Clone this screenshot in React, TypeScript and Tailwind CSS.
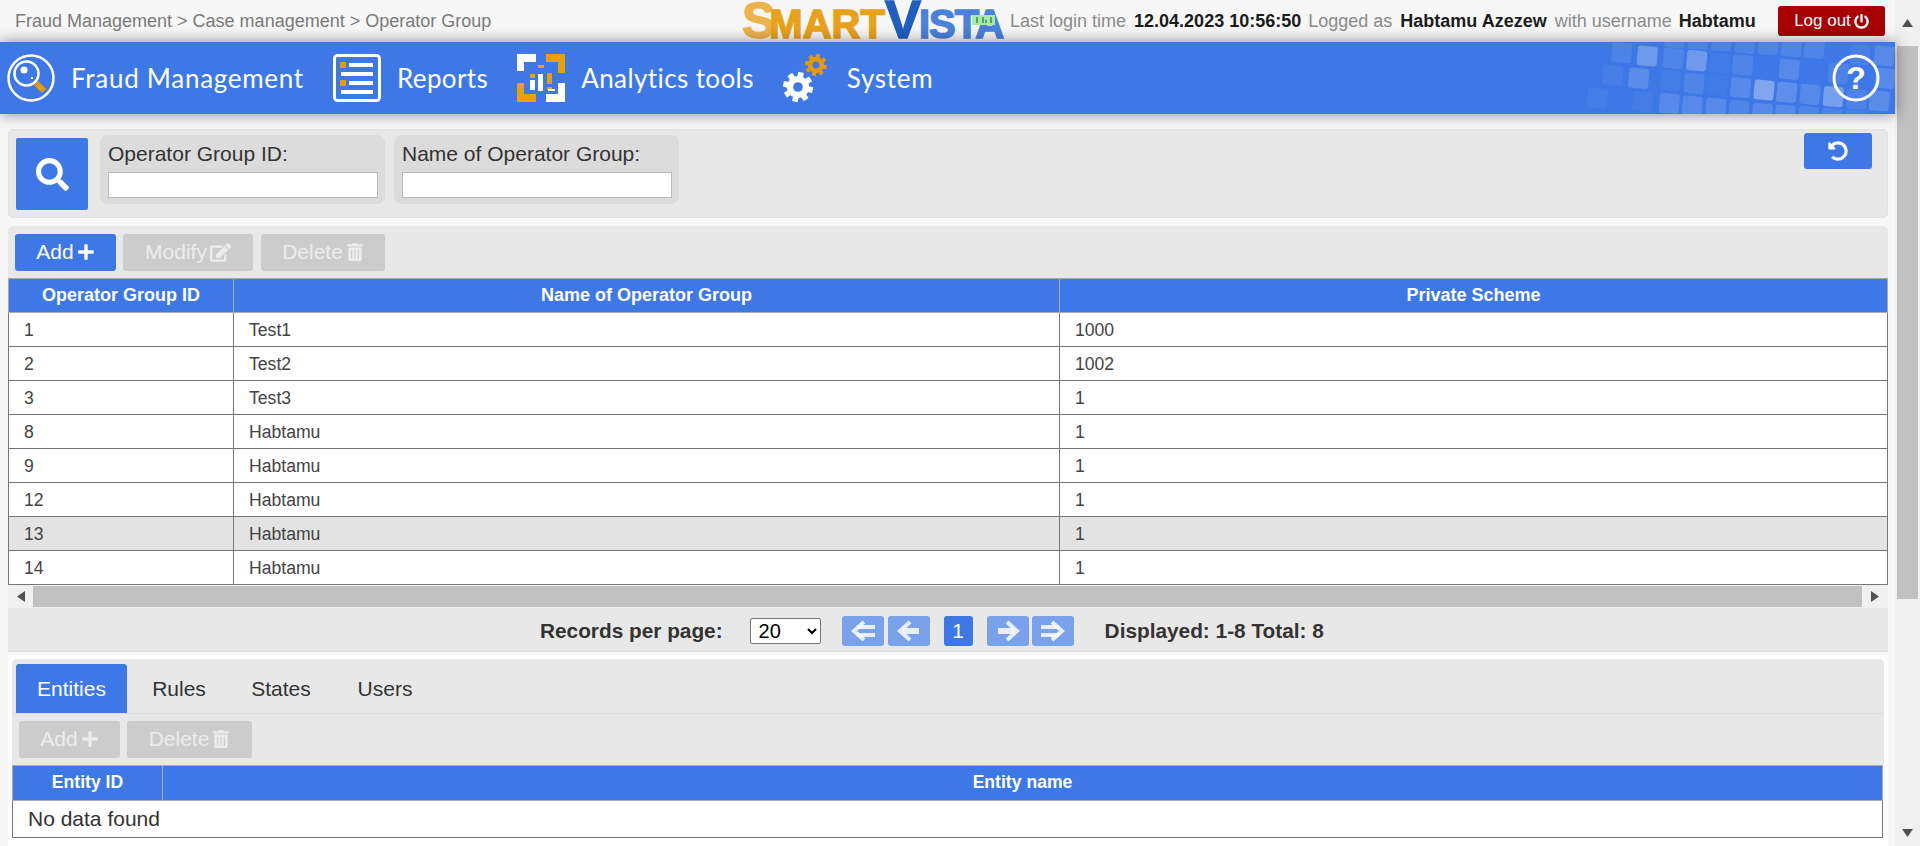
import React from "react";
import { FaPlus, FaEdit, FaTrashAlt, FaSearch, FaPowerOff, FaUndoAlt } from "react-icons/fa";

const rows = [
  ["1", "Test1", "1000"],
  ["2", "Test2", "1002"],
  ["3", "Test3", "1"],
  ["8", "Habtamu", "1"],
  ["9", "Habtamu", "1"],
  ["12", "Habtamu", "1"],
  ["13", "Habtamu", "1"],
  ["14", "Habtamu", "1"],
];

const tiles: [number, number, number][] = [
  [125, 38, 0.1], [202, 48, 0.3], [280, 55, 0.12], [350, 62, 0.3], [420, 70, 0.03], [488, 75, 0.12], [628, 88, 0.15],
  [98, 105, 0.07], [176, 115, 0.18], [272, 122, 0.05], [342, 130, 0.12], [412, 135, 0.03], [482, 143, 0.15], [552, 150, 0.4],
  [620, 157, 0.2], [690, 163, 0.15], [760, 170, 0.35], [898, 183, 0.18], [52, 175, 0.06], [188, 185, 0.05], [268, 190, 0.15],
  [337, 198, 0.15], [407, 205, 0.15], [477, 212, 0.12], [547, 220, 0.15], [615, 225, 0.15], [685, 230, 0.12], [755, 235, 0.1],
  [830, 178, 0.1], [915, 115, 0.15], [913, 48, 0.15], [840, 45, 0.07], [775, 100, 0.1], [703, 25, 0.12], [635, 20, 0.12],
  [565, 15, 0.12], [495, 10, 0.1], [425, 3, 0.1], [355, -2, 0.1], [285, -6, 0.1], [825, 240, 0.08],
];

function FraudIcon() {
  return (
    <svg width="48" height="48" viewBox="0 0 48 48" className="shrink-0">
      <circle cx="24" cy="24" r="22.5" fill="none" stroke="#fff" strokeWidth="2.5" />
      <circle cx="19.5" cy="19.5" r="12" fill="none" stroke="#fff" strokeWidth="2.5" />
      <circle cx="17" cy="16" r="3.6" fill="#fff" />
      <circle cx="25" cy="24" r="1.2" fill="#fff" />
      <line x1="29" y1="29" x2="37" y2="37" stroke="#e59a0c" strokeWidth="6" />
    </svg>
  );
}

function ReportsIcon() {
  return (
    <svg width="48" height="48" viewBox="0 0 48 48" className="shrink-0">
      <rect x="1.5" y="1.5" width="45" height="45" rx="3" fill="none" stroke="#fff" strokeWidth="3" />
      <rect x="7" y="8" width="6" height="6" fill="#e59a0c" />
      <rect x="16" y="9" width="24" height="4" fill="#fff" />
      <rect x="8" y="18" width="32" height="4" fill="#fff" />
      <rect x="7" y="26" width="6" height="6" fill="#e59a0c" />
      <rect x="16" y="27" width="24" height="4" fill="#fff" />
      <rect x="8" y="36" width="32" height="4" fill="#fff" />
    </svg>
  );
}

function AnalyticsIcon() {
  return (
    <svg width="48" height="48" viewBox="0 0 48 48" className="shrink-0">
      <path d="M0 0H19V8H7V17H0Z" fill="#fff" />
      <path d="M29 0H48V19H41V8H29Z" fill="#e9a100" />
      <path d="M0 29H7V40H19V48H0Z" fill="#e9a100" />
      <path d="M41 29H48V48H29V40H41Z" fill="#fff" />
      <rect x="21" y="11" width="6" height="3" fill="#e9a100" />
      <rect x="13" y="26" width="5" height="10" fill="#fff" />
      <rect x="21" y="20" width="5" height="17" fill="#fff" />
      <rect x="30" y="19" width="5" height="11" fill="#e9a100" />
      <rect x="30" y="33" width="5" height="3" fill="#e9a100" />
      <rect x="31" y="35" width="7" height="2" fill="#fff" />
      <rect x="13" y="20" width="5" height="4" fill="#e9a100" />
    </svg>
  );
}

function Gear({ cx, cy, r, fill }: { cx: number; cy: number; r: number; fill: string }) {
  return (
    <g>
      {[0, 45, 90, 135].map((a) => (
        <rect key={a} x={cx - r * 0.19} y={cy - r} width={r * 0.38} height={r * 2} fill={fill} transform={`rotate(${a + 12} ${cx} ${cy})`} />
      ))}
      <circle cx={cx} cy={cy} r={r * 0.74} fill={fill} />
      <circle cx={cx} cy={cy} r={r * 0.32} fill="#3d78e6" />
    </g>
  );
}

function SystemIcon() {
  return (
    <svg width="48" height="48" viewBox="0 0 48 48" className="shrink-0">
      <Gear cx={15} cy={33} r={15} fill="#fff" />
      <Gear cx={33} cy={11} r={11} fill="#e59a0c" />
    </svg>
  );
}

function Nav({ icon, label, cls, textCls }: { icon: React.ReactNode; label: string; cls: string; textCls: string }) {
  return (
    <div className={`flex items-center ${cls}`}>
      {icon}
      <span className={`ml-4 font-['Lato',sans-serif] text-[26px] text-white ${textCls}`}>{label}</span>
    </div>
  );
}

function Btn({ children, cls }: { children: React.ReactNode; cls: string }) {
  return (
    <div className={`flex h-[37px] items-center justify-center gap-[3px] rounded-[3px] pb-[1px] text-[21px] ${cls}`}>{children}</div>
  );
}

function DoubleArrow({ dir, double }: { dir: "l" | "r"; double?: boolean }) {
  return (
    <svg width="30" height="22" viewBox="0 0 30 22" className={dir === "r" ? "" : "-scale-x-100"}>
      <g fill="none" stroke="#fff" strokeOpacity="0.82" strokeWidth="4">
        {double ? (
          <>
            <path d="M3 7H21M3 15H21" />
            <path d="M14 2L24 11L14 20" />
          </>
        ) : (
          <>
            <path d="M5 11H21" strokeWidth="6" />
            <path d="M14 2L24 11L14 20" />
          </>
        )}
      </g>
    </svg>
  );
}

function PageBtn({ dir, double }: { dir: "l" | "r"; double?: boolean }) {
  return (
    <div className="flex h-[30px] w-[42px] items-center justify-center rounded-[3px] bg-[#7aa1ec]">
      <DoubleArrow dir={dir} double={double} />
    </div>
  );
}

function Tri({ dir, cls }: { dir: "u" | "d" | "l" | "r"; cls?: string }) {
  const p = { u: "0,8 5.5,0 11,8", d: "0,0 5.5,8 11,0", l: "8,0 0,5.5 8,11", r: "0,0 8,5.5 0,11" }[dir];
  const v = dir === "u" || dir === "d";
  return (
    <svg width={v ? 11 : 8} height={v ? 8 : 11} viewBox={v ? "0 0 11 8" : "0 0 8 11"} className={cls}>
      <polygon points={p} fill="#505050" />
    </svg>
  );
}

function Field({ label, cls }: { label: string; cls?: string }) {
  return (
    <div className={`h-[69px] w-[285px] rounded-[8px] bg-[#dcdcdc] px-2 pt-[6px] ${cls ?? ""}`}>
      <div className="h-[31px] text-[21px] leading-[26px] text-[#333]">{label}</div>
      <input className="block h-[26px] w-[270px] border border-[#b9b9b9] bg-white" readOnly />
    </div>
  );
}

function Logo() {
  return (
    <div className="relative ml-[251px] h-[42px] w-[265px] shrink-0 self-start whitespace-nowrap font-['Liberation_Sans',sans-serif] font-bold leading-[38px]">
      <span className="text-[50px] tracking-[-6px] text-[#eeb34d] [-webkit-text-stroke:1.5px_#eeb34d]">S</span>
      <span className="text-[40px] tracking-[0px] text-[#e8a21a] [-webkit-text-stroke:1.5px_#e8a21a]">MART</span>
      <span className="text-[54px] tracking-[-2px] text-[#1f5fbf] [-webkit-text-stroke:1.5px_#1f5fbf]">V</span>
      <span className="text-[40px] tracking-[-1px] text-[#4a82d8] [-webkit-text-stroke:1.5px_#4a82d8]">ISTA</span>
      <svg className="absolute left-[230px] top-[15px]" width="23" height="10" viewBox="0 0 23 10">
        <rect width="23" height="10" fill="#a9eaa6" />
        <rect x="4" y="2" width="2" height="6" fill="#4fa86a" />
        <rect x="10" y="2" width="2" height="6" fill="#4fa86a" />
        <rect x="13" y="5" width="2" height="3" fill="#4fa86a" />
        <rect x="18" y="2" width="2" height="6" fill="#4fa86a" />
      </svg>
    </div>
  );
}

export default function App() {
  return (
    <div className="flex h-[846px] w-[1920px] overflow-hidden bg-[#f7f7f7] font-['Liberation_Sans',Arial,sans-serif] text-[#333]">
      <div className="w-[1895px] shrink-0">
        {/* Top bar */}
        <div className="relative flex h-[42px] items-center">
          <div className="ml-[15px] w-[476px] shrink-0 whitespace-nowrap text-[18px] text-[#7a7a7a]">Fraud Management &gt; Case management &gt; Operator Group</div>
          <Logo />
          <div className="ml-[3px] flex items-center whitespace-nowrap text-[18px]">
            <span className="text-[#8a8a8a]">Last login time</span>
            <span className="ml-2 font-bold text-[#1c1c1c]">12.04.2023 10:56:50</span>
            <span className="ml-[7px] text-[#8a8a8a]">Logged as</span>
            <span className="ml-2 font-bold text-[#1c1c1c]">Habtamu Azezew</span>
            <span className="ml-2 text-[#8a8a8a]">with username</span>
            <span className="ml-[7px] font-bold text-[#1c1c1c]">Habtamu</span>
          </div>
          <div className="absolute right-[10px] top-[6px] flex h-[30px] w-[107px] items-center justify-center gap-[3px] rounded-[3px] bg-[#a80000] text-[17px] text-white">
            Log out <FaPowerOff className="text-[15px]" />
          </div>
        </div>

        {/* Nav */}
        <div className="relative flex h-[72px] items-center overflow-hidden bg-[#3d78e6] pl-[7px] shadow-[0_0_14px_rgba(0,0,0,0.45)]">
          <Nav icon={<FraudIcon />} label="Fraud Management" cls="" textCls="tracking-[0.72px]" />
          <Nav icon={<ReportsIcon />} label="Reports" cls="ml-[29px]" textCls="tracking-[0.4px]" />
          <Nav icon={<AnalyticsIcon />} label="Analytics tools" cls="ml-[29px]" textCls="tracking-[0.4px]" />
          <Nav icon={<SystemIcon />} label="System" cls="ml-[29px]" textCls="tracking-[0.7px]" />
          <svg className="absolute left-[1580px] top-[-2px]" width="315" height="76" viewBox="0 0 315 76">
            {tiles.map(([x, y, o], i) => (
              <rect key={i} x={x / 3 - 10} y={y / 3 - 10} width="20" height="20" rx="3" fill="#fff" fillOpacity={o * 0.85} transform={`rotate(5 ${x / 3} ${y / 3})`} />
            ))}
          </svg>
          <svg className="absolute left-[1832px] top-[12px]" width="48" height="48" viewBox="0 0 48 48">
            <circle cx="24" cy="24" r="22" fill="none" stroke="#fff" strokeWidth="3" />
            <text x="24" y="35" textAnchor="middle" fontSize="32" fontWeight="700" fontFamily="Liberation Sans" fill="#fff">?</text>
          </svg>
        </div>

        {/* Search */}
        <div className="ml-2 mr-[7px] mt-[15px] flex h-[89px] rounded-[5px] border border-[#e2e2e2] bg-[#e8e8e8] pl-[7px]">
          <div className="mt-2 flex h-[72px] w-[72px] items-center justify-center rounded-[2px] bg-[#3d78e6] text-white">
            <FaSearch className="text-[33px]" />
          </div>
          <Field label="Operator Group ID:" cls="ml-3 mt-[5px]" />
          <Field label="Name of Operator Group:" cls="ml-[9px] mt-[5px]" />
          <div className="ml-auto mr-[15px] mt-[3px] flex h-[36px] w-[68px] items-center justify-center rounded-[3px] bg-[#3d78e6] text-white">
            <FaUndoAlt className="text-[20px]" />
          </div>
        </div>

        {/* Table panel */}
        <div className="ml-2 mr-[7px] mt-2 rounded-t-[5px] bg-[#e8e8e8]">
          <div className="flex h-[52px] items-center gap-2 pl-[7px] pt-[1px]">
            <Btn cls="w-[101px] bg-[#3d78e6] text-white">Add <FaPlus className="text-[18px]" /></Btn>
            <Btn cls="ml-[-1px] w-[130px] bg-[#cccccc] text-[#ececec]">Modify <FaEdit className="text-[21px]" /></Btn>
            <Btn cls="w-[124px] bg-[#cccccc] text-[#ececec]">Delete <FaTrashAlt className="text-[18px]" /></Btn>
          </div>
          <table className="w-[1880px] table-fixed border-collapse bg-white text-[17.6px]">
            <colgroup>
              <col className="w-[225px]" />
              <col className="w-[826px]" />
              <col />
            </colgroup>
            <thead>
              <tr className="h-[34px] bg-[#3d78e6] text-[18px] font-bold text-white">
                <th className="border border-[#aaa]">Operator Group ID</th>
                <th className="border border-[#aaa]">Name of Operator Group</th>
                <th className="border border-[#aaa]">Private Scheme</th>
              </tr>
            </thead>
            <tbody>
              {rows.map((r) => (
                <tr key={r[0]} className={`h-[34px] ${r[0] === "13" ? "bg-[#e3e3e3]" : "bg-white"}`}>
                  {r.map((c, i) => (
                    <td key={i} className="border border-[#777] pl-[15px] pt-[1px] text-[#444]">{c}</td>
                  ))}
                </tr>
              ))}
            </tbody>
          </table>
          {/* horizontal scrollbar */}
          <div className="flex h-[23px] items-center bg-[#f0f0f0]">
            <div className="flex w-[25px] justify-center"><Tri dir="l" /></div>
            <div className="h-[21px] w-[1829px] bg-[#c0c0c0]" />
            <div className="flex w-[26px] justify-center"><Tri dir="r" /></div>
          </div>
          {/* pager */}
          <div className="flex h-[44px] items-center rounded-b-[3px] border-b border-[#dcdcdc] bg-[#e8e8e8] pl-[532px] pt-[2px] text-[20.8px] font-bold">
            <span>Records per page:</span>
            <select className="ml-[27px] h-[26px] w-[71px] rounded-[2px] border border-[#777] bg-white pl-1 text-[20px] font-normal text-black" defaultValue="20">
              <option>20</option>
            </select>
            <div className="ml-[21px] flex gap-1">
              <PageBtn dir="l" double />
              <PageBtn dir="l" />
            </div>
            <div className="ml-[14px] flex h-[30px] w-[29px] items-center justify-center rounded-[3px] bg-[#3d78e6] font-normal text-white">1</div>
            <div className="ml-[14px] flex gap-[3px]">
              <PageBtn dir="r" />
              <PageBtn dir="r" double />
            </div>
            <span className="ml-[31px]">Displayed: 1-8 Total: 8</span>
          </div>
        </div>

        {/* Bottom */}
        <div className="ml-2 mr-[7px] mt-[3px] h-[191px] bg-white px-1 pt-1">
          <div className="flex h-[54px] items-end rounded-t-[5px] bg-[#e8e8e8] pl-1 text-[21px]">
            <div className="flex h-[49px] w-[111px] items-center justify-center rounded-t-[3px] bg-[#3d78e6] text-white">Entities</div>
            <div className="flex h-[49px] w-[104px] items-center justify-center">Rules</div>
            <div className="flex h-[49px] w-[100px] items-center justify-center">States</div>
            <div className="flex h-[49px] w-[108px] items-center justify-center">Users</div>
          </div>
          <div className="flex h-[52px] items-center gap-[7px] border-t border-[#dcdcdc] bg-[#e8e8e8] pl-[7px]">
            <Btn cls="w-[101px] bg-[#cccccc] text-[#ececec]">Add <FaPlus className="text-[18px]" /></Btn>
            <Btn cls="w-[125px] bg-[#cccccc] text-[#ececec]">Delete <FaTrashAlt className="text-[18px]" /></Btn>
          </div>
          <table className="w-[1871px] table-fixed border-collapse text-[17.6px]">
            <colgroup>
              <col className="w-[150px]" />
              <col />
            </colgroup>
            <thead>
              <tr className="h-[35px] bg-[#3d78e6] font-bold text-white">
                <th className="border border-[#aaa] pb-[2px]">Entity ID</th>
                <th className="border border-[#aaa] pb-[2px]">Entity name</th>
              </tr>
            </thead>
            <tbody>
              <tr className="h-[37px]">
                <td colSpan={2} className="border border-[#777] pl-[15px] text-[21px]">No data found</td>
              </tr>
            </tbody>
          </table>
        </div>
      </div>

      {/* Vertical scrollbar */}
      <div className="flex w-[25px] shrink-0 flex-col items-center bg-[#f0f0f0]">
        <div className="flex h-[46px] items-center"><Tri dir="u" /></div>
        <div className="h-[553px] w-[21px] bg-[#c0c0c0]" />
        <div className="flex-1" />
        <div className="mb-[9px]"><Tri dir="d" /></div>
      </div>
    </div>
  );
}
